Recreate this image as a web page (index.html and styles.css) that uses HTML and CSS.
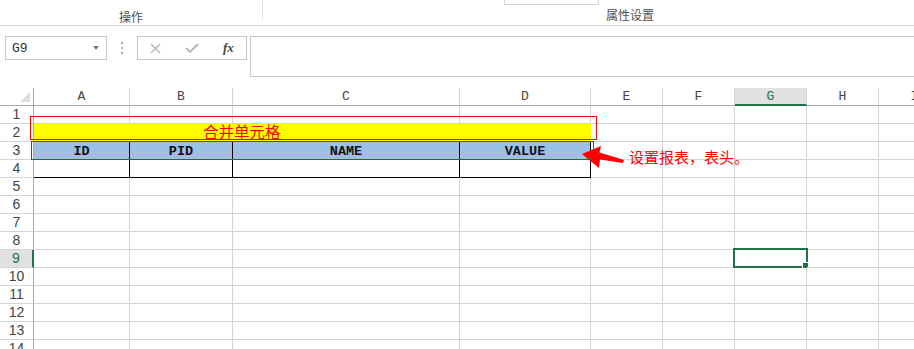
FILE: index.html
```html
<!DOCTYPE html>
<html lang="zh-CN">
<head>
    <meta charset="UTF-8">
    <title>设置报表表头</title>
    <link rel="stylesheet" href="styles.css">
</head>
<body>
    <!-- 功能区底部 -->
    <div class="ribbon">
        <div class="group group-op"><span class="group-label">操作</span></div>
        <div class="group-sep"></div>
        <div class="group group-prop">
            <div class="stub"></div>
            <span class="group-label">属性设置</span>
        </div>
    </div>

    <!-- 编辑栏 -->
    <div class="formula-bar">
        <div class="name-box"><span>G9</span><span class="caret"></span></div>
        <div class="more"><i></i><i></i><i></i></div>
        <div class="fx-box">
            <svg class="icon-x" width="11" height="11" viewBox="0 0 11 11"><path d="M1 1L10 10M10 1L1 10" stroke="#b4b4b4" stroke-width="1.4" fill="none"/></svg>
            <svg class="icon-ok" width="14" height="10" viewBox="0 0 14 10"><path d="M1 5L5 9L13 1" stroke="#b4b4b4" stroke-width="1.8" fill="none"/></svg>
            <span class="fx">fx</span>
        </div>
        <div class="formula-input"></div>
    </div>

    <!-- 表格 -->
    <div class="sheet">
        <div class="corner"></div>
        <div class="ch">A</div><div class="ch">B</div><div class="ch">C</div><div class="ch">D</div><div class="ch">E</div><div class="ch">F</div><div class="ch sel">G</div><div class="ch">H</div><div class="ch">I</div>

        <div class="rh">1</div>
        <div class="c"></div><div class="c"></div><div class="c"></div><div class="c"></div><div class="c"></div><div class="c"></div><div class="c"></div><div class="c"></div><div class="c"></div>

        <div class="rh">2</div>
        <div class="c merged">合并单元格</div><div class="c"></div><div class="c"></div><div class="c"></div><div class="c"></div><div class="c"></div>

        <div class="rh">3</div>
        <div class="c head">ID</div><div class="c head">PID</div><div class="c head">NAME</div><div class="c head">VALUE</div>
        <div class="c"></div><div class="c"></div><div class="c"></div><div class="c"></div><div class="c"></div>

        <div class="rh">4</div>
        <div class="c body"></div><div class="c body"></div><div class="c body"></div><div class="c body"></div>
        <div class="c"></div><div class="c"></div><div class="c"></div><div class="c"></div><div class="c"></div>

        <div class="rh">5</div>
        <div class="c"></div><div class="c"></div><div class="c"></div><div class="c"></div><div class="c"></div><div class="c"></div><div class="c"></div><div class="c"></div><div class="c"></div>
        <div class="rh">6</div>
        <div class="c"></div><div class="c"></div><div class="c"></div><div class="c"></div><div class="c"></div><div class="c"></div><div class="c"></div><div class="c"></div><div class="c"></div>
        <div class="rh">7</div>
        <div class="c"></div><div class="c"></div><div class="c"></div><div class="c"></div><div class="c"></div><div class="c"></div><div class="c"></div><div class="c"></div><div class="c"></div>
        <div class="rh">8</div>
        <div class="c"></div><div class="c"></div><div class="c"></div><div class="c"></div><div class="c"></div><div class="c"></div><div class="c"></div><div class="c"></div><div class="c"></div>
        <div class="rh sel">9</div>
        <div class="c"></div><div class="c"></div><div class="c"></div><div class="c"></div><div class="c"></div><div class="c"></div><div class="c active"></div><div class="c"></div><div class="c"></div>
        <div class="rh">10</div>
        <div class="c"></div><div class="c"></div><div class="c"></div><div class="c"></div><div class="c"></div><div class="c"></div><div class="c"></div><div class="c"></div><div class="c"></div>
        <div class="rh">11</div>
        <div class="c"></div><div class="c"></div><div class="c"></div><div class="c"></div><div class="c"></div><div class="c"></div><div class="c"></div><div class="c"></div><div class="c"></div>
        <div class="rh">12</div>
        <div class="c"></div><div class="c"></div><div class="c"></div><div class="c"></div><div class="c"></div><div class="c"></div><div class="c"></div><div class="c"></div><div class="c"></div>
        <div class="rh">13</div>
        <div class="c"></div><div class="c"></div><div class="c"></div><div class="c"></div><div class="c"></div><div class="c"></div><div class="c"></div><div class="c"></div><div class="c"></div>
        <div class="rh">14</div>
        <div class="c"></div><div class="c"></div><div class="c"></div><div class="c"></div><div class="c"></div><div class="c"></div><div class="c"></div><div class="c"></div><div class="c"></div>
    </div>

    <!-- 标注 -->
    <div class="mark mark-merge"></div>
    <div class="mark mark-head"></div>
    <svg class="arrow" width="46" height="28" viewBox="580 144 46 28">
        <path d="M582 154 L601 146 L599.5 152.5 L624 160 L623 163 L600 159.5 L599 168 Z" fill="#ff0000"/>
    </svg>
    <span class="note">设置报表，表头。</span>
</body>
</html>
```

FILE: styles.css
```css
/* 基本 */
body {
    margin: 0;
    width: 914px;
    height: 349px;
    overflow: hidden;
    position: relative;
    background: #fff;
    font-family: "Noto Sans CJK SC", sans-serif;
    color: #444;
}

/* 功能区 */
.ribbon {
    display: flex;
    align-items: flex-start;
    height: 25px;
    border-bottom: 1px solid #d5d5d5;
}

.group-op {
    width: 262px;
    text-align: center;
    padding-top: 3px;
}

.group-sep {
    width: 1px;
    height: 20px;
    background: #e1e1e1;
}

.group-prop {
    flex: 1;
    display: flex;
    flex-direction: column;
    align-items: flex-start;
}

.group-prop .stub {
    width: 93px;
    height: 4px;
    margin: -1px 0 0 241px;
    border: 1px solid #d6d6d6;
}

.group-prop .group-label {
    margin: 2px 0 0 343px;
}

.group-label {
    font-size: 12px;
    line-height: 16px;
    color: #505050;
}

/* 编辑栏 */
.formula-bar {
    display: flex;
    align-items: flex-start;
    padding: 10px 0 0 5px;
    margin-bottom: 11px;
}

.name-box {
    width: 102px;
    height: 24px;
    box-sizing: border-box;
    border: 1px solid #c6c6c6;
    display: flex;
    align-items: center;
    padding-left: 6px;
    font-family: "Liberation Mono", monospace;
    font-size: 13px;
    color: #333;
}

.name-box .caret {
    margin: 0 7px 0 auto;
    width: 0;
    height: 0;
    border-left: 3px solid transparent;
    border-right: 3px solid transparent;
    border-top: 4px solid #777;
}

.more {
    width: 30px;
    height: 24px;
    display: flex;
    flex-direction: column;
    align-items: center;
    justify-content: center;
    gap: 3px;
}

.more i {
    width: 2px;
    height: 2px;
    background: #a8a8a8;
}

.fx-box {
    width: 110px;
    height: 24px;
    box-sizing: border-box;
    border: 1px solid #c6c6c6;
    display: flex;
    align-items: center;
    padding-left: 12px;
}

.fx-box .icon-ok {
    margin-left: 24px;
}

.fx-box .fx {
    margin-left: 24px;
    font-family: "Liberation Serif", serif;
    font-style: italic;
    font-weight: bold;
    font-size: 13px;
    color: #444;
}

.formula-input {
    flex: 1;
    height: 41px;
    margin-left: 3px;
    margin-right: -2px;
    box-sizing: border-box;
    border: 1px solid #c6c6c6;
}

/* 表格 */
.sheet {
    display: grid;
    grid-template-columns: 34px 96px 103px 227px 131px 72px 72px 72px 72px 72px;
    grid-auto-rows: 18px;
    height: 261px;
    overflow: hidden;
}

.sheet > div {
    box-sizing: border-box;
    border-right: 1px solid #d4d4d4;
    border-bottom: 1px solid #d4d4d4;
}

.corner {
    position: relative;
    border-right-color: #ababab !important;
    border-bottom-color: #ababab !important;
}

.corner::after {
    content: "";
    position: absolute;
    right: 3px;
    bottom: 3px;
    width: 0;
    height: 0;
    border-left: 10px solid transparent;
    border-bottom: 10px solid #dcdcdc;
}

.ch {
    border-bottom-color: #ababab !important;
    text-align: center;
    font-family: "Liberation Mono", monospace;
    font-size: 13px;
    line-height: 17px;
}

.ch.sel {
    background: #e1e1e1;
    border-bottom: 2px solid #217346 !important;
    color: #217346;
}

.rh {
    border-right-color: #ababab !important;
    text-align: center;
    font-family: "Liberation Sans", sans-serif;
    font-size: 14px;
    line-height: 17px;
}

.rh.sel {
    background: #e1e1e1;
    border-right: 2px solid #217346 !important;
    color: #217346;
}

.c {
    position: relative;
}

.c.merged {
    grid-column: span 4;
    background: #ffff00;
    color: #ff0000;
    font-size: 15.5px;
    line-height: 15px;
    padding-left: 169px;
    border-right-color: #ffff00 !important;
}

.c.head {
    background: #9bc2e6;
    border-right-color: #000 !important;
    border-bottom-color: #000 !important;
    text-align: center;
    font-family: "Liberation Mono", monospace;
    font-weight: bold;
    font-size: 13.5px;
    line-height: 19px;
    color: #111;
}

.c.body {
    border-right-color: #000 !important;
    border-bottom-color: #000 !important;
}

/* 选中单元格 */
.c.active::before {
    content: "";
    position: absolute;
    left: -2px;
    top: -2px;
    right: -2px;
    bottom: -1px;
    border: 2px solid #217346;
}

.c.active::after {
    content: "";
    position: absolute;
    right: -3px;
    bottom: -2px;
    width: 5px;
    height: 5px;
    background: #217346;
    border: 1px solid #fff;
}

/* 标注 */
.mark {
    position: absolute;
    border: 1px solid #ff0000;
}

.mark-merge {
    left: 30px;
    top: 116px;
    width: 565px;
    height: 22px;
}

.mark-head {
    left: 31px;
    top: 141px;
    width: 561px;
    height: 17px;
}

.arrow {
    position: absolute;
    left: 580px;
    top: 144px;
}

.note {
    position: absolute;
    left: 629px;
    top: 147px;
    font-size: 15px;
    line-height: 20px;
    color: #ff0000;
    white-space: nowrap;
}
```
